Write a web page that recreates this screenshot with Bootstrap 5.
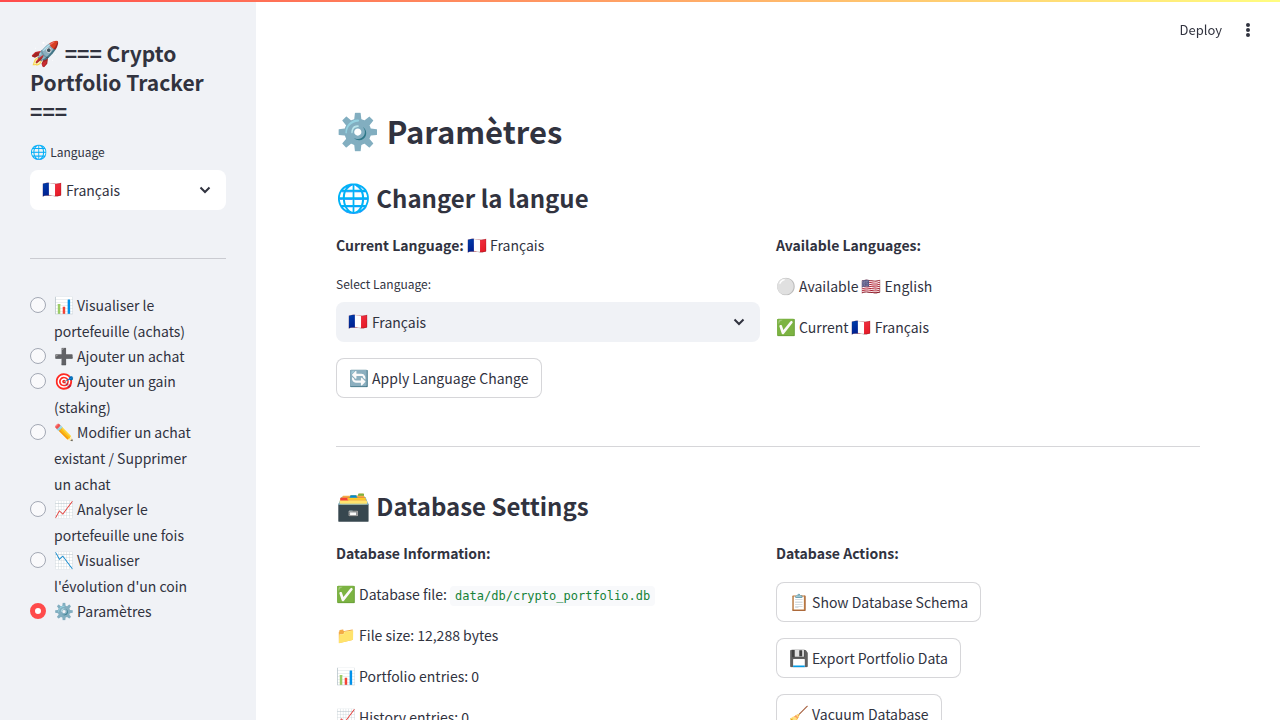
<!DOCTYPE html>
<html lang="fr">
<head>
<meta charset="utf-8">
<meta name="viewport" content="width=device-width, initial-scale=1">
<title>Crypto Portfolio Tracker</title>
<link href="https://cdn.jsdelivr.net/npm/bootstrap@5.3.0/dist/css/bootstrap.min.css" rel="stylesheet">
<style>
body { font-family: "Noto Sans CJK SC", "Noto Color Emoji", sans-serif; font-size: 14px; line-height: 26px; color: #31333f; }
.topline { height: 2px; background: linear-gradient(90deg, #ff4b4b, #fffd80); z-index: 10; }
.sidebar { width: 256px; background: #f0f2f6; padding: 39px 30px; }
.sidebar hr { margin: 48px 0 33px; }
.sidebar nav { padding-right: 20px; }
.content { padding: 104px 80px 80px; scrollbar-width: none; }
.content::-webkit-scrollbar { display: none; }
hr { border-color: #31333f; opacity: .2; margin: 48px 0 42px; }
h1, h2, h3, strong { font-weight: 600; }
h1 { font-size: 31px; line-height: 53px; margin-bottom: 24px; }
h2 { font-size: 24px; line-height: 34px; margin-bottom: 17px; }
h3 { font-size: 21px; line-height: 29px; }
.emo { font-family: "Noto Color Emoji", sans-serif; font-size: 16px; line-height: 1; }
h1 .emo { font-size: 35px; }
h2 .emo { font-size: 28px; }
h3 .emo { font-size: 24px; }
.field-label { font-size: 12px; line-height: 20px; }
.field-label .emo { font-size: 14px; }
.picker { height: 40px; padding: 0 12px; border-radius: 8px; background: #f0f2f6; }
.sidebar .picker { background: #fff; }
.picker select { appearance: none; border: 0; background: transparent; color: inherit; outline: 0; padding: 0 4px; }
.picker svg { width: 18px; height: 18px; pointer-events: none; }
.btn-plain { height: 40px; padding: 0 12px; border: 1px solid rgba(49,51,63,.2); border-radius: 8px; background: #fff; color: inherit; font-size: 14px; line-height: 26px; }
.page-item-choice + .page-item-choice { margin-top: -1px; }
.page-item-choice input { appearance: none; flex: none; width: 16px; height: 16px; margin: 5px 8px 0 0; border: 1px solid #a3a8b4; border-radius: 50%; background: #f9f9fb; }
.page-item-choice input:checked { border: 5px solid #ff4b4b; background: #fff; }
.lines { gap: 15px; }
.path-code { font-family: "DejaVu Sans Mono", monospace; font-size: 12px; line-height: 16px; color: #158237; background: #f8f9fb; border-radius: 4px; padding: 3px 5px; }
.deploybar { top: 17px; right: 23px; gap: 17px; }
.deploybar button { border: 0; background: none; padding: 0; color: inherit; font-size: 13px; }
</style>
</head>
<body class="vh-100 overflow-hidden">
<div class="topline position-fixed top-0 start-0 end-0"></div>
<div class="d-flex h-100">
  <aside class="sidebar flex-shrink-0">
    <h3 class="mb-0"><span class="emo">🚀</span> === Crypto Portfolio Tracker ===</h3>
    <label class="field-label d-block mt-3 mb-2" for="side-lang"><span class="emo">🌐</span> Language</label>
    <div class="picker d-flex align-items-center">
      <span class="emo">🇫🇷</span>
      <select id="side-lang" class="flex-grow-1"><option>Français</option><option>English</option></select>
      <svg viewBox="0 0 18 18" fill="none" stroke="#31333f" stroke-width="2"><path d="M4.5 6.5 9 11l4.5-4.5"/></svg>
    </div>
    <hr>
    <nav>
      <div class="page-item-choice d-flex"><input type="radio" name="page" id="p1"><label for="p1"><span class="emo">📊</span> Visualiser le portefeuille (achats)</label></div>
      <div class="page-item-choice d-flex"><input type="radio" name="page" id="p2"><label for="p2"><span class="emo">➕</span> Ajouter un achat</label></div>
      <div class="page-item-choice d-flex"><input type="radio" name="page" id="p3"><label for="p3"><span class="emo">🎯</span> Ajouter un gain (staking)</label></div>
      <div class="page-item-choice d-flex"><input type="radio" name="page" id="p4"><label for="p4"><span class="emo">✏️</span> Modifier un achat existant / Supprimer un achat</label></div>
      <div class="page-item-choice d-flex"><input type="radio" name="page" id="p5"><label for="p5"><span class="emo">📈</span> Analyser le portefeuille une fois</label></div>
      <div class="page-item-choice d-flex"><input type="radio" name="page" id="p6"><label for="p6"><span class="emo">📉</span> Visualiser l'évolution d'un coin</label></div>
      <div class="page-item-choice d-flex"><input type="radio" name="page" id="p7" checked><label for="p7"><span class="emo">⚙️</span> Paramètres</label></div>
    </nav>
  </aside>
  <main class="content flex-grow-1 overflow-auto">
    <div class="deploybar position-fixed d-flex align-items-center">
      <button type="button">Deploy</button>
      <button type="button" class="d-flex" aria-label="Menu"><svg width="18" height="18" viewBox="0 0 18 18" fill="#31333f"><circle cx="9" cy="4" r="2"/><circle cx="9" cy="9" r="2"/><circle cx="9" cy="14" r="2"/></svg></button>
    </div>
    <h1><span class="emo">⚙️</span> Paramètres</h1>
    <h2><span class="emo">🌐</span> Changer la langue</h2>
    <div class="row g-3">
      <div class="col-6">
        <div><strong>Current Language:</strong> <span class="emo">🇫🇷</span> Français</div>
        <label class="field-label d-block mt-3 mb-2" for="main-lang">Select Language:</label>
        <div class="picker d-flex align-items-center">
          <span class="emo">🇫🇷</span>
          <select id="main-lang" class="flex-grow-1"><option>Français</option><option>English</option></select>
          <svg viewBox="0 0 18 18" fill="none" stroke="#31333f" stroke-width="2"><path d="M4.5 6.5 9 11l4.5-4.5"/></svg>
        </div>
        <button type="button" class="btn btn-plain mt-3"><span class="emo">🔄</span> Apply Language Change</button>
      </div>
      <div class="col-6 d-flex flex-column lines">
        <div><strong>Available Languages:</strong></div>
        <div><span class="emo">⚪</span> Available <span class="emo">🇺🇸</span> English</div>
        <div><span class="emo">✅</span> Current <span class="emo">🇫🇷</span> Français</div>
      </div>
    </div>
    <hr>
    <h2><span class="emo">🗃️</span> Database Settings</h2>
    <div class="row g-3">
      <div class="col-6 d-flex flex-column lines">
        <div><strong>Database Information:</strong></div>
        <div><span class="emo">✅</span> Database file: <code class="path-code">data/db/crypto_portfolio.db</code></div>
        <div><span class="emo">📁</span> File size: 12,288 bytes</div>
        <div><span class="emo">📊</span> Portfolio entries: 0</div>
        <div><span class="emo">📈</span> History entries: 0</div>
      </div>
      <div class="col-6 d-flex flex-column align-items-start gap-3">
        <div><strong>Database Actions:</strong></div>
        <button type="button" class="btn btn-plain"><span class="emo">📋</span> Show Database Schema</button>
        <button type="button" class="btn btn-plain"><span class="emo">💾</span> Export Portfolio Data</button>
        <button type="button" class="btn btn-plain"><span class="emo">🧹</span> Vacuum Database</button>
      </div>
    </div>
  </main>
</div>
<script src="https://cdn.jsdelivr.net/npm/bootstrap@5.3.0/dist/js/bootstrap.bundle.min.js"></script>
</body>
</html>
